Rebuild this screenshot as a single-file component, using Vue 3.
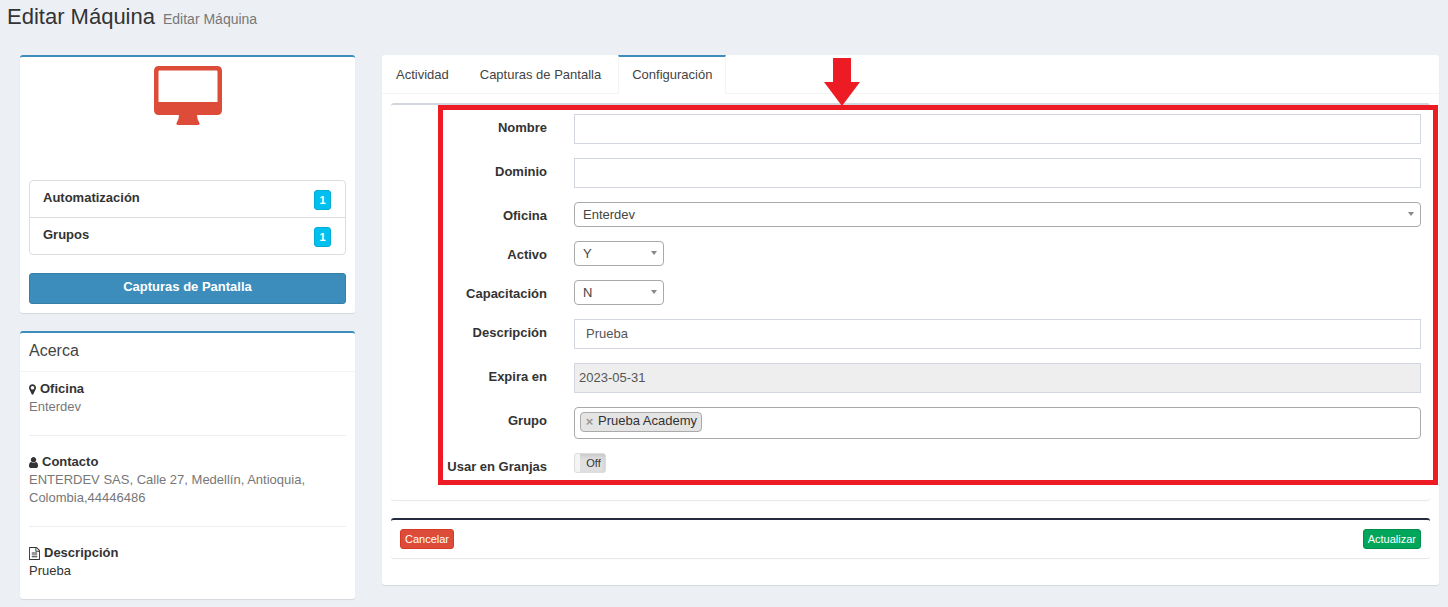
<script setup>
import { ref } from 'vue'

const counters = [
  { label: 'Automatización', count: 1 },
  { label: 'Grupos', count: 1 },
]

const tabs = ['Actividad', 'Capturas de Pantalla', 'Configuración']
const activeTab = ref('Configuración')

const form = ref({
  nombre: '',
  dominio: '',
  oficina: 'Enterdev',
  activo: 'Y',
  capacitacion: 'N',
  descripcion: 'Prueba',
  expira: '2023-05-31',
  grupos: ['Prueba Academy'],
  granjas: false,
})

function removeGroup(name) {
  form.value.grupos = form.value.grupos.filter((g) => g !== name)
}
</script>

<template>
  <div class="page">
    <header class="page-header">
      <h1>Editar Máquina</h1>
      <small>Editar Máquina</small>
    </header>

    <div class="columns">
      <aside class="side">
        <section class="box profile">
          <svg class="monitor" viewBox="0 0 68 60" aria-hidden="true">
            <path
              fill="#dd4b39"
              fill-rule="evenodd"
              d="M5 0H63Q68 0 68 5V44Q68 49 63 49H43Q43 53 45 56Q46.500 59 44 59H24Q21.500 59 23 56Q25 53 25 49H5Q0 49 0 44V5Q0 0 5 0ZM5.500 4.500Q4.500 4.500 4.500 5.500V36H63.500V5.500Q63.500 4.500 62.500 4.500Z"
            />
          </svg>
          <ul class="counters">
            <li v-for="item in counters" :key="item.label">
              <b>{{ item.label }}</b>
              <button type="button" class="count">{{ item.count }}</button>
            </li>
          </ul>
          <a href="#" class="primary">Capturas de Pantalla</a>
        </section>

        <section class="box about">
          <h2>Acerca</h2>
          <div class="about-body">
            <div class="about-item">
              <h3>
                <svg class="ico-marker" viewBox="0 0 1024 1792" aria-hidden="true"><path d="M768 640q0-106-75-181t-181-75-181 75-75 181 75 181 181 75 181-75 75-181zm256 0q0 109-33 179l-364 774q-16 33-47.500 52t-67.500 19-67.500-19-46.500-52l-365-774q-33-70-33-179 0-212 150-362t362-150 362 150 150 362z" /></svg>
                Oficina
              </h3>
              <p>Enterdev</p>
            </div>
            <div class="about-item">
              <h3>
                <svg class="ico-user" viewBox="0 0 1280 1792" aria-hidden="true"><path d="M1280 1399q0 109-62.500 187t-150.500 78h-854q-88 0-150.500-78t-62.500-187q0-85 8.500-160.500t31.500-152 58.500-131 94-89 134.500-34.500q131 128 313 128t313-128q76 0 134.500 34.500t94 89 58.500 131 31.500 152 8.500 160.500zm-256-887q0 159-112.500 271.500t-271.500 112.500-271.500-112.500-112.500-271.500 112.500-271.500 271.500-112.500 271.500 112.500 112.500 271.500z" /></svg>
                Contacto
              </h3>
              <p>ENTERDEV SAS, Calle 27, Medellín, Antioquia, Colombia,44446486</p>
            </div>
            <div class="about-item">
              <h3>
                <svg class="ico-file" viewBox="0 0 1536 1792" aria-hidden="true"><path d="M1468 380q28 28 48 76t20 88v1152q0 40-28 68t-68 28h-1344q-40 0-68-28t-28-68v-1600q0-40 28-68t68-28h896q40 0 88 20t76 48zm-444-244v376h376q-10-29-22-41l-313-313q-12-12-41-22zm384 1528v-1024h-416q-40 0-68-28t-28-68v-416h-768v1536h1280zm-1024-864q0-14 9-23t23-9h704q14 0 23 9t9 23v64q0 14-9 23t-23 9h-704q-14 0-23-9t-9-23v-64zm736 224q14 0 23 9t9 23v64q0 14-9 23t-23 9h-704q-14 0-23-9t-9-23v-64q0-14 9-23t23-9h704zm0 256q14 0 23 9t9 23v64q0 14-9 23t-23 9h-704q-14 0-23-9t-9-23v-64q0-14 9-23t23-9h704z" /></svg>
                Descripción
              </h3>
              <p class="dark">Prueba</p>
            </div>
          </div>
        </section>
      </aside>

      <main class="panel">
        <nav class="tabs">
          <a
            v-for="tab in tabs"
            :key="tab"
            href="#"
            :class="{ active: tab === activeTab }"
            @click.prevent="activeTab = tab"
          >{{ tab }}</a>
        </nav>

        <form class="panel-body" @submit.prevent>
          <div class="box fields">
            <div class="row">
              <label for="nombre">Nombre</label>
              <input id="nombre" v-model="form.nombre" class="text" type="text" />
            </div>
            <div class="row">
              <label for="dominio">Dominio</label>
              <input id="dominio" v-model="form.dominio" class="text" type="text" />
            </div>
            <div class="row">
              <label for="oficina">Oficina</label>
              <div class="pick">
                <select id="oficina" v-model="form.oficina">
                  <option>Enterdev</option>
                </select>
              </div>
            </div>
            <div class="row">
              <label for="activo">Activo</label>
              <div class="pick short">
                <select id="activo" v-model="form.activo">
                  <option>Y</option>
                  <option>N</option>
                </select>
              </div>
            </div>
            <div class="row">
              <label for="capacitacion">Capacitación</label>
              <div class="pick short">
                <select id="capacitacion" v-model="form.capacitacion">
                  <option>Y</option>
                  <option>N</option>
                </select>
              </div>
            </div>
            <div class="row">
              <label for="descripcion">Descripción</label>
              <input id="descripcion" v-model="form.descripcion" class="text" type="text" />
            </div>
            <div class="row">
              <label for="expira">Expira en</label>
              <input id="expira" v-model="form.expira" class="text locked" type="text" readonly />
            </div>
            <div class="row">
              <label for="grupo">Grupo</label>
              <div class="tags">
                <span v-for="g in form.grupos" :key="g" class="tag">
                  <button type="button" @click="removeGroup(g)">×</button>{{ g }}
                </span>
                <input id="grupo" type="text" />
              </div>
            </div>
            <div class="row">
              <label for="granjas">Usar en Granjas</label>
              <div class="toggle">
                <input id="granjas" v-model="form.granjas" type="checkbox" />
                <span class="handle"></span>
                <span class="state">{{ form.granjas ? 'On' : 'Off' }}</span>
              </div>
            </div>

            <div class="highlight">
              <svg class="arrow" viewBox="0 0 36 48" aria-hidden="true">
                <path fill="#ed1c24" d="M9 0H27V24H36L18 48L0 24H9Z" />
              </svg>
            </div>
          </div>

          <div class="box actions">
            <button type="button" class="btn danger">Cancelar</button>
            <button type="submit" class="btn success">Actualizar</button>
          </div>
        </form>
      </main>
    </div>
  </div>
</template>

<style>
html,
body {
  margin: 0;
  background: #ecf0f5;
}
</style>

<style scoped>
.page,
.page * {
  box-sizing: border-box;
}

.page {
  font-family: "Liberation Sans", Arial, Helvetica, sans-serif;
  font-size: 13px;
  line-height: 18px;
  color: #333;
}

.page input,
.page select,
.page button {
  font-family: inherit;
  font-size: 13px;
  color: #444;
}

h1,
h2,
h3,
p,
ul {
  margin: 0;
  padding: 0;
  font-weight: 400;
}

.page-header {
  display: flex;
  align-items: baseline;
  gap: 8px;
  padding: 5px 7px 26px;
}

h1 {
  font-size: 22px;
  line-height: 24px;
}

small {
  font-size: 14px;
  line-height: 18px;
  color: #777;
}

.columns {
  display: grid;
  grid-template-columns: 335fr 1057fr;
  align-items: start;
  gap: 27px;
  padding: 0 9px 8px 20px;
}

.box {
  background: #fff;
  border-top: 2px solid #d2d6de;
  border-radius: 3px;
  box-shadow: 0 1px 1px rgba(0, 0, 0, 0.1);
}

.side {
  display: flex;
  flex-direction: column;
  gap: 18px;
}

.side .box {
  border-top-color: #3c8dbc;
}

.profile {
  padding: 9px;
}

.monitor {
  display: block;
  width: 68px;
  height: 60px;
  margin: 0 auto 54px;
}

.counters {
  list-style: none;
  margin-bottom: 18px;
  border: 1px solid #ddd;
  border-radius: 4px;
}

.counters li {
  display: flex;
  justify-content: space-between;
  height: 36px;
  padding: 8px 14px 0 13px;
}

.counters li + li {
  height: 37px;
  border-top: 1px solid #ddd;
}

.counters b {
  font-weight: 700;
}

.page .count {
  width: 17px;
  height: 20px;
  margin-top: 1px;
  padding: 0;
  border: 1px solid #00acd6;
  border-radius: 3px;
  background: #00c0ef;
  color: #fff;
  font-size: 11px;
  font-weight: 700;
  line-height: 18px;
}

.primary {
  display: block;
  height: 31px;
  padding-top: 4px;
  border: 1px solid #367fa9;
  border-radius: 3px;
  background: #3c8dbc;
  color: #fff;
  font-weight: 700;
  text-align: center;
  text-decoration: none;
}

.about h2 {
  padding: 8px 9px 10px;
  border-bottom: 1px solid #f4f4f4;
  font-size: 16px;
  line-height: 20px;
  color: #444;
}

.about-body {
  padding: 8px 9px 19px;
}

.about-item {
  padding-bottom: 19px;
}

.about-item + .about-item {
  padding-top: 17px;
  border-top: 1px solid #eee;
}

.about-item:last-child {
  padding-bottom: 0;
}

.about-item h3 {
  display: flex;
  align-items: center;
  gap: 4px;
  font-size: 13px;
  font-weight: 700;
}

.about-item svg {
  height: 13px;
  fill: #333;
}

.ico-marker {
  width: 7px;
}

.ico-user {
  width: 9px;
}

.ico-file {
  width: 11px;
}

.about-item p {
  color: #777;
}

.about-item .dark {
  color: #333;
}

.panel {
  background: #fff;
  border-radius: 3px;
  box-shadow: 0 1px 1px rgba(0, 0, 0, 0.1);
}

.tabs {
  display: flex;
  gap: 3px;
  height: 39px;
  padding-left: 1px;
  border-bottom: 1px solid #f4f4f4;
}

.tabs a {
  height: 39px;
  padding: 9px 13px 0;
  border: solid transparent;
  border-width: 2px 1px 0;
  color: #444;
  text-decoration: none;
}

.tabs a:first-child {
  border-left-width: 0;
}

.tabs .active {
  border-color: #3c8dbc #f4f4f4 transparent;
  background: #fff;
}

.panel-body {
  display: flex;
  flex-direction: column;
  gap: 18px;
  padding: 9px 9px 27px;
}

.fields {
  position: relative;
  display: flex;
  flex-direction: column;
  gap: 14px;
  padding: 9px 9px 24px;
}

.row {
  display: grid;
  grid-template-columns: 147fr 847fr;
  align-items: start;
  gap: 27px;
}

.row label {
  padding-top: 5px;
  font-weight: 700;
  text-align: right;
}

.text {
  width: 100%;
  height: 30px;
  padding: 0 11px 2px;
  border: 1px solid #d2d6de;
  border-radius: 0;
  background: #fff;
  outline: none;
}

.page .text {
  color: #555;
}

.locked {
  padding: 0 4px 2px;
  background: #eee;
}

.pick {
  position: relative;
}

.short {
  width: 90px;
}

.pick select {
  display: block;
  width: 100%;
  height: 25px;
  padding: 0 20px 0 8px;
  border: 1px solid #aaa;
  border-radius: 4px;
  background: #fff;
  appearance: none;
}

.pick::after {
  content: "";
  position: absolute;
  top: 10px;
  right: 7px;
  border: solid transparent;
  border-width: 4px 3px 0;
  border-top-color: #888;
  pointer-events: none;
}

.tags {
  display: flex;
  align-items: flex-start;
  height: 32px;
  padding: 4px 5px;
  border: 1px solid #aaa;
  border-radius: 4px;
  background: #fff;
}

.tag {
  display: flex;
  flex: none;
  height: 20px;
  padding: 0 4px;
  border: 1px solid #aaa;
  border-radius: 4px;
  background: #e4e4e4;
  line-height: 16px;
}

.page .tag button {
  width: 9px;
  margin-right: 4px;
  padding: 0;
  border: 0;
  background: none;
  color: #999;
  font-weight: 700;
  line-height: 16px;
}

.tags input {
  flex: 1;
  min-width: 0;
  height: 20px;
  border: 0;
  outline: none;
  background: none;
}

.toggle {
  position: relative;
  display: flex;
  width: 32px;
  height: 20px;
  border: 1px solid #ddd;
  border-radius: 3px;
  background: #e0e0e0;
  box-shadow: inset 0 2px 4px rgba(0, 0, 0, 0.12);
  overflow: hidden;
}

.toggle input {
  position: absolute;
  inset: 0;
  width: 100%;
  height: 100%;
  margin: 0;
  opacity: 0;
}

.handle {
  width: 5px;
  background: #f4f4f4;
}

.state {
  flex: 1;
  padding-left: 2px;
  font-size: 11px;
  line-height: 18px;
  text-align: center;
}

.highlight {
  position: absolute;
  top: 0;
  right: -8px;
  bottom: 15px;
  left: 47px;
  border: 5px solid #ed1c24;
  pointer-events: none;
}

.arrow {
  position: absolute;
  bottom: calc(100% + 4px);
  left: 40%;
  width: 36px;
  height: 48px;
  margin-left: -15px;
}

.actions {
  display: flex;
  justify-content: space-between;
  padding: 9px;
  border-top-color: #272b3f;
}

.page .btn {
  height: 20px;
  padding: 0 4px;
  border: 1px solid;
  border-radius: 3px;
  color: #fff;
  font-size: 11px;
  line-height: 18px;
}

.page .danger {
  border-color: #d73925;
  background: #dd4b39;
}

.page .success {
  border-color: #008d4c;
  background: #00a65a;
}
</style>
